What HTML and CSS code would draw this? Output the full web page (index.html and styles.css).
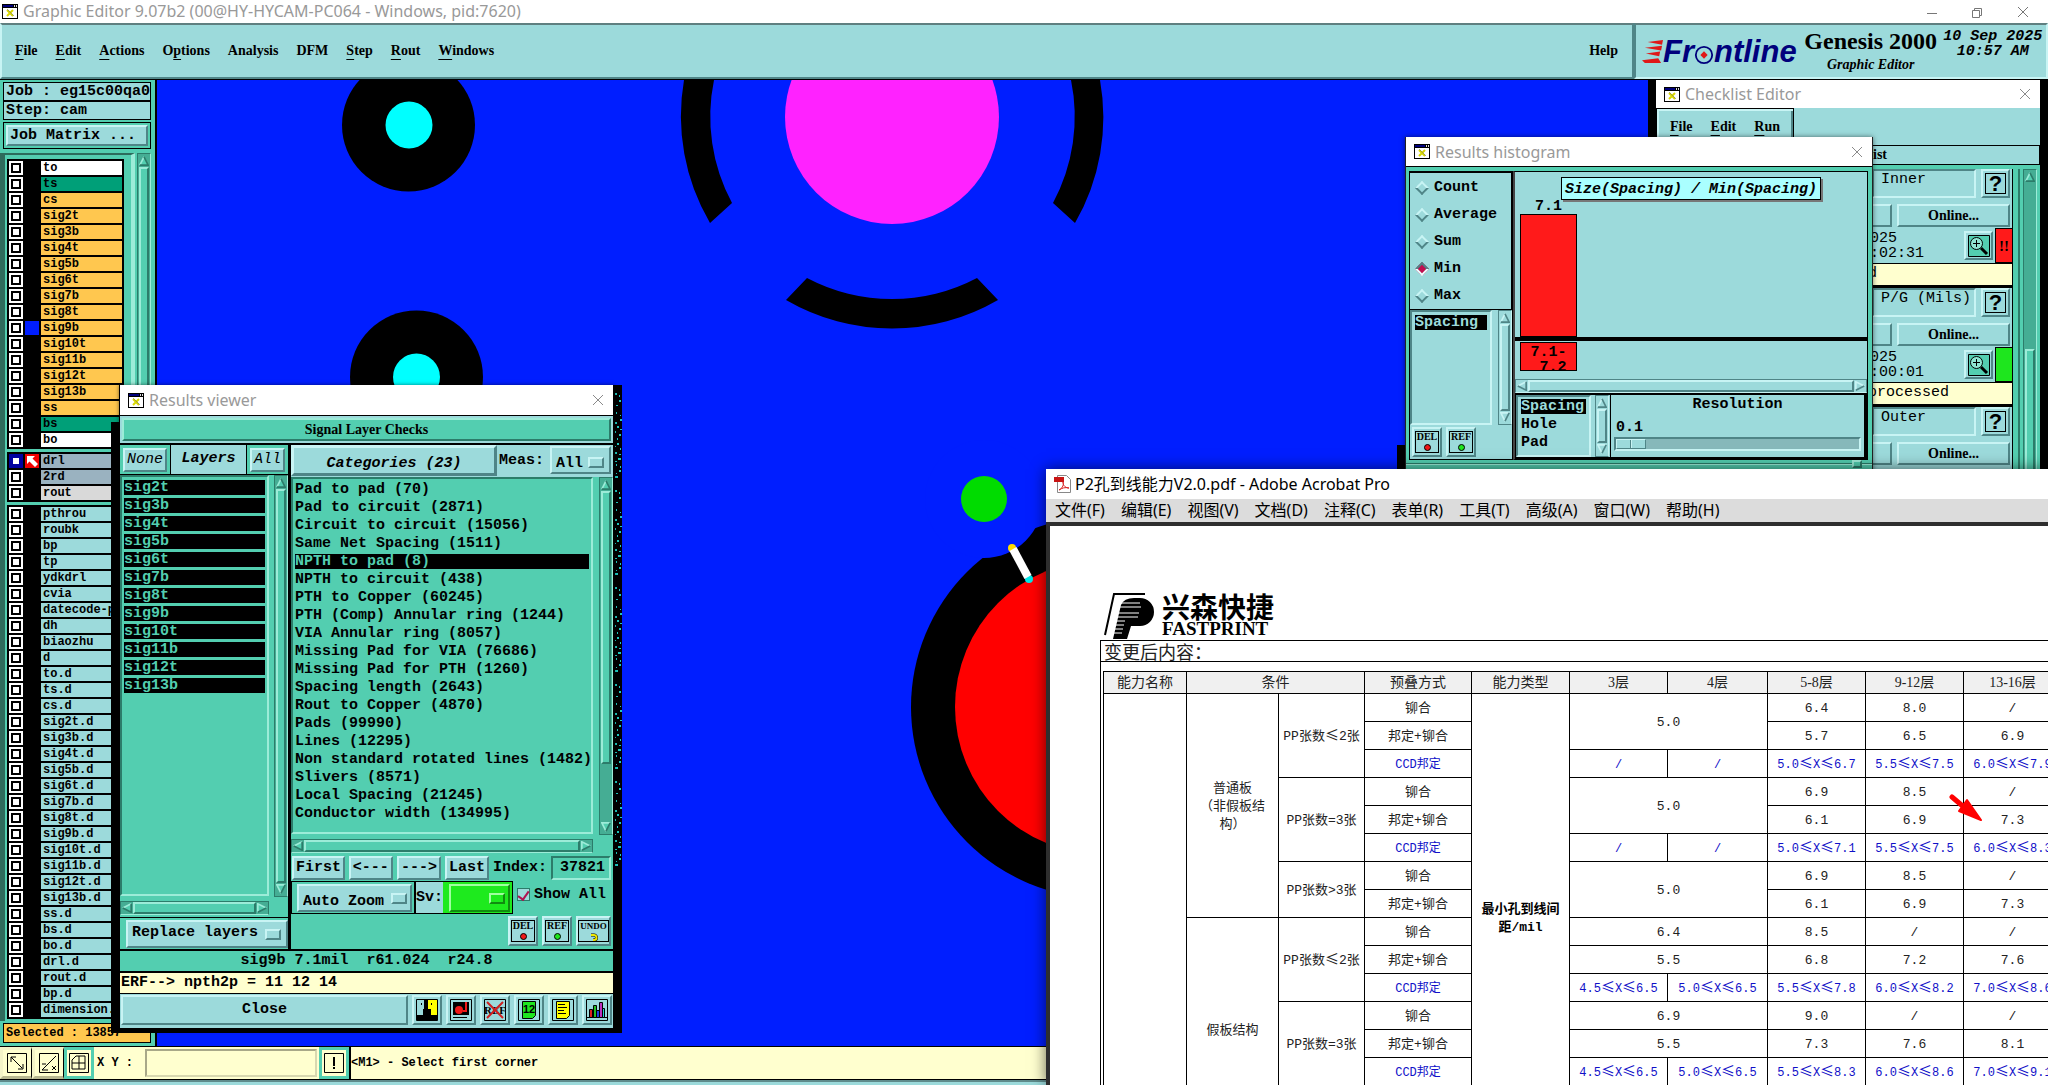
FILE: index.html
```
<!DOCTYPE html>
<html lang="en">
<head>
<meta charset="utf-8">
<title>Graphic Editor</title>
<link rel="stylesheet" href="styles.css">
</head>
<body>
<svg class="defs" aria-hidden="true">
  <symbol id="xwin" viewBox="0 0 16 15"><path fill="#000" d="M0 0h16v15H0z"/><path fill="#fff" d="M1 4h14v10H1z"/><path fill="#00007c" d="M1 1h10v2H1z"/><path fill="#ddd" d="M12 1h1v2h-1zM14 1h1v2h-1z"/><path d="M5 6l6 6M11 6l-6 6" stroke="#d8d800" stroke-width="2"/><path d="M5 5l7 7" stroke="#666" stroke-width=".5"/></symbol>
  <symbol id="close" viewBox="0 0 12 12"><path d="M1 1l10 10M11 1L1 11" stroke="#8a8a8a" fill="none"/></symbol>
  <symbol id="up" viewBox="0 0 12 12"><path d="M1 11L6 1l5 10z" fill="var(--face)"/><path d="M1 11L6 1" stroke="var(--hi)" stroke-width="2"/><path d="M6 1l5 10H1" stroke="var(--lo)" stroke-width="2" fill="none"/></symbol>
  <symbol id="down" viewBox="0 0 12 12"><path d="M1 1l5 10 5-10z" fill="var(--face)"/><path d="M6 11L1 1h10" stroke="var(--hi)" stroke-width="2" fill="none"/><path d="M11 1L6 11" stroke="var(--lo)" stroke-width="2"/></symbol>
  <symbol id="left" viewBox="0 0 12 12"><path d="M11 1L1 6l10 5z" fill="var(--face)"/><path d="M11 1L1 6" stroke="var(--hi)" stroke-width="2"/><path d="M1 6l10 5V1" stroke="var(--lo)" stroke-width="2" fill="none"/></symbol>
  <symbol id="right" viewBox="0 0 12 12"><path d="M1 1l10 5-10 5z" fill="var(--face)"/><path d="M11 6L1 1v10" stroke="var(--hi)" stroke-width="2" fill="none"/><path d="M1 11l10-5" stroke="var(--lo)" stroke-width="2"/></symbol>
  <symbol id="lens" viewBox="0 0 22 22"><path d="M.5.500h21v21h-21z" fill="#53ceb0" stroke="#000"/><circle cx="8.500" cy="8.500" r="6" fill="#8fe6d2" stroke="#000"/><path d="M5 8.500h7M8.500 5v7" stroke="#000"/><path d="M13 13l6 6" stroke="#000" stroke-width="3"/></symbol>
  <symbol id="arc" viewBox="0 0 8 8"><path d="M1 2h3a2 2 0 0 1 0 5H3" fill="none" stroke="#000" stroke-width="3"/><path d="M1 2h3a2 2 0 0 1 0 5H3" fill="none" stroke="#f0e800" stroke-width="2"/></symbol>
</svg>

<div class="app">
  <header class="titlebar main-title">
    <svg class="ico"><use href="#xwin"/></svg><span class="grow">Graphic Editor 9.07b2 (00@HY-HYCAM-PC064 - Windows, pid:7620)</span>
    <svg class="winctl" viewBox="0 0 108 16"><path d="M4 9.500h10M95 3l10 10M105 3L95 13M49.500 6.500h7v7h-7zM51.500 6.500v-2h7v7h-2" fill="none" stroke="#777"/></svg>
  </header>
  <div class="topbar">
    <nav class="menubar">
      <a href="#"><u>F</u>ile</a><a href="#"><u>E</u>dit</a><a href="#"><u>A</u>ctions</a><a href="#">O<u>p</u>tions</a><a href="#">Analysis</a><a href="#">DFM</a><a href="#"><u>S</u>tep</a><a href="#"><u>R</u>out</a><a href="#"><u>W</u>indows</a><a class="help" href="#">Help</a>
    </nav>
    <div class="brand">
      <div class="frontline">
        <svg class="speed" viewBox="0 0 22 26"><path fill="#e01818" d="M6 2l16-2-1 5zM3 8l18-2-1 5zM4 14l15-2-1 5zM0 21l17-2 3 5H3z"/></svg><span>Fr</span><svg class="target" viewBox="0 0 22 22"><circle cx="11" cy="11" r="9" fill="#9cdadb" stroke="#00007c" stroke-width="2"/><path d="M11 7l4 4-4 4-4-4z" fill="#e01818"/></svg><span>ntline</span>
      </div>
      <div class="product"><strong>Genesis 2000</strong><em>Graphic Editor</em></div>
      <div class="clock">10 Sep 2025<br>10:57 AM</div>
    </div>
  </div>

  <div class="work">
    <aside class="side">
      <div class="info">Job : eg15c00qa0</div>
      <div class="info">Step: cam</div>
      <div class="matrix"><button class="raised">Job Matrix ...</button></div>
      <div class="layers">
        <div class="groups">
          <ul class="group">
            <li class="w"><input type="checkbox" id="l1"><i></i><label for="l1">to</label></li>
            <li class="g"><input type="checkbox" id="l2"><i></i><label for="l2">ts</label></li>
            <li class="o"><input type="checkbox" id="l3"><i></i><label for="l3">cs</label></li>
            <li class="o"><input type="checkbox" id="l4"><i></i><label for="l4">sig2t</label></li>
            <li class="o"><input type="checkbox" id="l5"><i></i><label for="l5">sig3b</label></li>
            <li class="o"><input type="checkbox" id="l6"><i></i><label for="l6">sig4t</label></li>
            <li class="o"><input type="checkbox" id="l7"><i></i><label for="l7">sig5b</label></li>
            <li class="o"><input type="checkbox" id="l8"><i></i><label for="l8">sig6t</label></li>
            <li class="o"><input type="checkbox" id="l9"><i></i><label for="l9">sig7b</label></li>
            <li class="o"><input type="checkbox" id="l10"><i></i><label for="l10">sig8t</label></li>
            <li class="o"><input type="checkbox" id="l11"><i class="shown"></i><label for="l11">sig9b</label></li>
            <li class="o"><input type="checkbox" id="l12"><i></i><label for="l12">sig10t</label></li>
            <li class="o"><input type="checkbox" id="l13"><i></i><label for="l13">sig11b</label></li>
            <li class="o"><input type="checkbox" id="l14"><i></i><label for="l14">sig12t</label></li>
            <li class="o"><input type="checkbox" id="l15"><i></i><label for="l15">sig13b</label></li>
            <li class="o"><input type="checkbox" id="l16"><i></i><label for="l16">ss</label></li>
            <li class="g"><input type="checkbox" id="l17"><i></i><label for="l17">bs</label></li>
            <li class="w"><input type="checkbox" id="l18"><i></i><label for="l18">bo</label></li>
          </ul>
          <ul class="group">
            <li class="s"><input type="checkbox" id="l19" checked><i class="active"><svg viewBox="0 0 14 14"><path fill="#fff" d="M2 2h8L7.500 4.500 13 10l-3 3-5.500-5.500L2 10z"/></svg></i><label for="l19">drl</label></li>
            <li class="s"><input type="checkbox" id="l20"><i></i><label for="l20">2rd</label></li>
            <li class="l"><input type="checkbox" id="l21"><i></i><label for="l21">rout</label></li>
          </ul>
          <ul class="group">
            <li><input type="checkbox" id="m1"><i></i><label for="m1">pthrou</label></li>
            <li><input type="checkbox" id="m2"><i></i><label for="m2">roubk</label></li>
            <li><input type="checkbox" id="m3"><i></i><label for="m3">bp</label></li>
            <li><input type="checkbox" id="m4"><i></i><label for="m4">tp</label></li>
            <li><input type="checkbox" id="m5"><i></i><label for="m5">ydkdrl</label></li>
            <li><input type="checkbox" id="m6"><i></i><label for="m6">cvia</label></li>
            <li><input type="checkbox" id="m7"><i></i><label for="m7">datecode-p</label></li>
            <li><input type="checkbox" id="m8"><i></i><label for="m8">dh</label></li>
            <li><input type="checkbox" id="m9"><i></i><label for="m9">biaozhu</label></li>
            <li><input type="checkbox" id="m10"><i></i><label for="m10">d</label></li>
            <li><input type="checkbox" id="m11"><i></i><label for="m11">to.d</label></li>
            <li><input type="checkbox" id="m12"><i></i><label for="m12">ts.d</label></li>
            <li><input type="checkbox" id="m13"><i></i><label for="m13">cs.d</label></li>
            <li><input type="checkbox" id="m14"><i></i><label for="m14">sig2t.d</label></li>
            <li><input type="checkbox" id="m15"><i></i><label for="m15">sig3b.d</label></li>
            <li><input type="checkbox" id="m16"><i></i><label for="m16">sig4t.d</label></li>
            <li><input type="checkbox" id="m17"><i></i><label for="m17">sig5b.d</label></li>
            <li><input type="checkbox" id="m18"><i></i><label for="m18">sig6t.d</label></li>
            <li><input type="checkbox" id="m19"><i></i><label for="m19">sig7b.d</label></li>
            <li><input type="checkbox" id="m20"><i></i><label for="m20">sig8t.d</label></li>
            <li><input type="checkbox" id="m21"><i></i><label for="m21">sig9b.d</label></li>
            <li><input type="checkbox" id="m22"><i></i><label for="m22">sig10t.d</label></li>
            <li><input type="checkbox" id="m23"><i></i><label for="m23">sig11b.d</label></li>
            <li><input type="checkbox" id="m24"><i></i><label for="m24">sig12t.d</label></li>
            <li><input type="checkbox" id="m25"><i></i><label for="m25">sig13b.d</label></li>
            <li><input type="checkbox" id="m26"><i></i><label for="m26">ss.d</label></li>
            <li><input type="checkbox" id="m27"><i></i><label for="m27">bs.d</label></li>
            <li><input type="checkbox" id="m28"><i></i><label for="m28">bo.d</label></li>
            <li><input type="checkbox" id="m29"><i></i><label for="m29">drl.d</label></li>
            <li><input type="checkbox" id="m30"><i></i><label for="m30">rout.d</label></li>
            <li><input type="checkbox" id="m31"><i></i><label for="m31">bp.d</label></li>
            <li><input type="checkbox" id="m32"><i></i><label for="m32">dimension.</label></li>
          </ul>
        </div>
        <div class="vbar green"><svg><use href="#up"/></svg><span class="thumb"></span></div>
      </div>
      <div class="selected">Selected : 13857</div>
    </aside>
    <main class="canvas">
      <svg class="board">
        <g transform="translate(-157 -80)">
          <circle cx="408.500" cy="125" r="66.500"/><circle cx="409" cy="125" r="23.500" fill="#0ff"/>
          <circle cx="416.500" cy="377" r="66.500"/><circle cx="416.500" cy="377" r="23.500" fill="#0ff"/>
          <circle cx="892" cy="117" r="107" fill="#ff22ff"/>
          <path d="M786 300A211 211 0 0 0 998 300L977 278A182 182 0 0 1 807 278z"/>
          <path d="M710 223A211 211 0 0 1 684 80H714A182 182 0 0 0 732 203z"/>
          <path d="M1075 223A211 211 0 0 0 1100 80H1071A182 182 0 0 1 1053 203z"/>
          <circle cx="1102" cy="707" r="191"/><circle cx="984" cy="499" r="59" fill="#001eff"/>
          <circle cx="984" cy="499" r="23" fill="#00dc00"/><circle cx="1102" cy="707" r="147" fill="#f00"/>
          <circle cx="1012" cy="548" r="4" fill="#ffdc00"/><circle cx="1029" cy="579" r="4" fill="#00e8e8"/><path d="M1013 549l15 28" stroke="#fff" stroke-width="8"/>
          <path d="M1648 80h9v60h-9zM1397 445h9v30h-9zM2040 80h8v400h-8z"/>
        </g>
      </svg>
    </main>
  </div>

  <footer class="statusbar">
    <button class="tool" aria-label="Snap"><svg viewBox="0 0 20 20"><path d="M.5.500h19v19H.5zM4 9V4h5M4 4l11 11M11 16h5v-5" fill="none" stroke="#000"/></svg></button>
    <button class="tool" aria-label="Angle"><svg viewBox="0 0 20 20"><path d="M.5.500h19v19H.5zM17 3L3 17h6M3 11h4M13 13l4 4M17 13l-4 4" fill="none" stroke="#000"/></svg></button>
    <button class="tool on" aria-label="Grid"><svg viewBox="0 0 20 20"><path d="M.5.500h19v19H.5zM7 3h9v13H3V7zM10 3v13M3 10h13" fill="none" stroke="#000"/></svg></button>
    <label class="xy" for="xy">X Y :</label><input id="xy" type="text">
    <button class="tool on" aria-label="Alert"><svg viewBox="0 0 20 20"><path d="M.5.500h19v19H.5z" fill="none" stroke="#000"/><path d="M9 4h2v9H9zM9 14h2v2H9z"/></svg></button>
    <output>&lt;M1&gt; - Select first corner</output>
  </footer>
  <div class="edge"></div>
</div>

<section class="win checklist">
  <header class="titlebar"><svg class="ico"><use href="#xwin"/></svg><span class="grow">Checklist Editor</span><svg class="x"><use href="#close"/></svg></header>
  <nav class="cmenu"><a href="#"><u>F</u>ile</a><a href="#"><u>E</u>dit</a><a href="#"><u>R</u>un</a></nav>
  <h2>ist</h2>
  <div class="citems">
    <div class="clist">
      <article>
        <div class="r1"><input type="text" aria-label="Check" value="Inner"><button class="q raised">?</button></div>
        <div class="r2"><button class="raised short" aria-label="Run"></button><button class="raised">Online...</button></div>
        <div class="r3"><time>025<br>:02:31</time><button class="raised lens" aria-label="View"><svg><use href="#lens"/></svg></button><b class="bad">!!</b></div>
        <p>d</p>
      </article>
      <article>
        <div class="r1"><input type="text" aria-label="Check" value="P/G (Mils)"><button class="q raised">?</button></div>
        <div class="r2"><button class="raised short" aria-label="Run"></button><button class="raised">Online...</button></div>
        <div class="r3"><time>025<br>:00:01</time><button class="raised lens" aria-label="View"><svg><use href="#lens"/></svg></button><b class="ok"></b></div>
        <p>processed</p>
      </article>
      <article>
        <div class="r1"><input type="text" aria-label="Check" value="Outer"><button class="q raised">?</button></div>
        <div class="r2"><button class="raised short" aria-label="Run"></button><button class="raised">Online...</button></div>
      </article>
    </div>
    <div class="vbar green"><svg><use href="#up"/></svg><span class="thumb low"></span></div>
  </div>
</section>

<section class="win histogram">
  <header class="titlebar"><svg class="ico"><use href="#xwin"/></svg><span class="grow">Results histogram</span><svg class="x"><use href="#close"/></svg></header>
  <div class="hbody">
    <div class="hleft">
      <fieldset>
        <label><input type="radio" name="agg">Count</label>
        <label><input type="radio" name="agg">Average</label>
        <label><input type="radio" name="agg">Sum</label>
        <label><input type="radio" name="agg" checked>Min</label>
        <label><input type="radio" name="agg">Max</label>
      </fieldset>
      <div class="pick">
        <ul class="sunk"><li class="sel">Spacing</li></ul>
        <div class="vbar"><svg><use href="#up"/></svg><span class="thumb"></span><svg><use href="#down"/></svg></div>
      </div>
      <div class="acts"><button class="raised act"><span>DEL<i class="red"></i></span></button><button class="raised act"><span>REF<i class="grn"></i></span></button></div>
    </div>
    <div class="hright">
      <div class="plot">
        <h3>Size(Spacing) / Min(Spacing)</h3>
        <div class="bars"><span>7.1</span><div class="bar" style="height:123px"></div></div>
      </div>
      <div class="axis"><div>7.1-<br>&nbsp;7.2</div></div>
      <div class="hbar"><svg><use href="#left"/></svg><span class="thumb"></span><svg><use href="#right"/></svg></div>
      <div class="hfoot">
        <ul class="sunk"><li class="sel">Spacing</li><li>Hole</li><li>Pad</li></ul>
        <div class="vbar"><svg><use href="#up"/></svg><span class="thumb"></span><svg><use href="#down"/></svg></div>
        <div class="res"><label for="res">Resolution</label><output>0.1</output><input id="res" type="range" min="0" max="10" value="0"></div>
      </div>
    </div>
  </div>
  <div class="sash"><span></span></div>
</section>

<div class="ghost"><svg><defs><pattern id="noise" width="8" height="97" patternUnits="userSpaceOnUse"><path fill="#20c8c0" d="M1 8h2v2H1zM5 10h1v2H5zM5 15h2v2H5zM2 20h2v1H2zM2 27h1v2H2zM6 30h1v1H6zM6 34h2v2H6zM1 37h2v2H1zM3 41h2v2H3zM6 44h2v1H6zM1 46h1v2H1zM5 49h2v2H5zM3 53h1v2H3zM3 58h2v2H3zM1 61h1v1H1zM6 63h1v2H6zM1 67h2v2H1zM5 69h2v1H5zM4 73h3v2H4zM1 76h2v1H1zM2 79h1v2H2zM6 81h1v2H6zM5 85h2v2H5zM2 88h1v1H2zM1 91h3v2H1z"/></pattern></defs><rect width="8" height="485" fill="url(#noise)"/></svg></div>
<section class="win viewer">
  <header class="titlebar"><svg class="ico"><use href="#xwin"/></svg><span class="grow">Results viewer</span><svg class="x"><use href="#close"/></svg></header>
  <h2><span>Signal Layer Checks</span></h2>
  <div class="vbody">
    <div class="vleft">
      <div class="vhead"><div><button class="raised it">None</button></div><b>Layers</b><div><button class="raised it">All</button></div></div>
      <div class="vlist">
        <div class="col">
          <ul class="sunkg picked"><li>sig2t</li><li>sig3b</li><li>sig4t</li><li>sig5b</li><li>sig6t</li><li>sig7b</li><li>sig8t</li><li>sig9b</li><li>sig10t</li><li>sig11b</li><li>sig12t</li><li>sig13b</li></ul>
          <div class="hbar green"><svg><use href="#left"/></svg><span class="thumb"></span><svg><use href="#right"/></svg></div>
        </div>
        <div class="vbar green"><svg><use href="#up"/></svg><span class="thumb"></span><svg><use href="#down"/></svg></div>
      </div>
      <div class="replace"><span class="opt"><select class="raised" aria-label="Layer mode"><option>Replace layers</option></select></span></div>
    </div>
    <div class="vright">
      <div class="chead"><button class="raised cat">Categories (23)</button><label for="meas">Meas:</label><span class="opt"><select id="meas" class="raised"><option>All</option></select></span></div>
      <div class="vlist">
        <div class="col">
          <ul class="sunkg cats"><li>Pad to pad (70)</li><li>Pad to circuit (2871)</li><li>Circuit to circuit (15056)</li><li>Same Net Spacing (1511)</li><li class="sel">NPTH to pad (8)</li><li>NPTH to circuit (438)</li><li>PTH to Copper (60245)</li><li>PTH (Comp) Annular ring (1244)</li><li>VIA Annular ring (8057)</li><li>Missing Pad for VIA (76686)</li><li>Missing Pad for PTH (1260)</li><li>Spacing length (2643)</li><li>Rout to Copper (4870)</li><li>Pads (99990)</li><li>Lines (12295)</li><li>Non standard rotated lines (1482)</li><li>Slivers (8571)</li><li>Local Spacing (21245)</li><li>Conductor width (134995)</li></ul>
          <div class="hbar green"><svg><use href="#left"/></svg><span class="thumb"></span><svg><use href="#right"/></svg></div>
        </div>
        <div class="vbar green"><svg><use href="#up"/></svg><span class="thumb part"></span><svg><use href="#down"/></svg></div>
      </div>
      <div class="navrow"><button class="raised">First</button><button class="raised">&lt;---</button><button class="raised">---&gt;</button><button class="raised">Last</button><label for="idx">Index:</label><input id="idx" type="text" value="37821"></div>
      <div class="zoomrow">
        <div class="zbox"><span class="opt z"><select class="raised" aria-label="Zoom"><option>Auto Zoom</option></select></span><label for="sv">Sv:</label><span class="opt sv"><select id="sv" class="raised"><option></option></select></span></div>
        <label class="show"><input type="checkbox" checked>Show All</label>
      </div>
      <div class="acts"><button class="raised act"><span>DEL<i class="red"></i></span></button><button class="raised act"><span>REF<i class="grn"></i></span></button><button class="raised act undo"><span>UNDO<svg><use href="#arc"/></svg></span></button></div>
    </div>
  </div>
  <output class="stat">sig9b 7.1mil &nbsp;r61.024 &nbsp;r24.8</output>
  <output class="erf">ERF--&gt; npth2p = 11 12 14</output>
  <div class="foot">
    <button class="raised closebtn">Close</button>
    <button class="raised fi" aria-label="Contrast"><svg viewBox="0 0 22 22"><path fill="#9cdadb" stroke="#000" d="M.5.500h21v21H.5z"/><path fill="#ff0" d="M11 1h10v16H11z"/><path d="M8 1h4v9h3v6h6v5H1v-5h6v-6h1zM5 4h1v2H5zM15 4h1v2h-1z"/></svg></button>
    <button class="raised fi" aria-label="Snapshot"><svg viewBox="0 0 22 22"><path fill="#9cdadb" stroke="#000" d="M.5.500h21v21H.5z"/><path d="M3 3h16v13H3zM3 18h14v1H3z"/><circle cx="9" cy="11" r="4" fill="#f01818"/><path fill="#f01818" d="M15 3h2v10h-2zM13 11h4v2h-4z"/></svg></button>
    <button class="raised fi" aria-label="No reference"><svg viewBox="0 0 22 22"><path fill="none" stroke="#000" d="M.5.500h21v21H.5z"/><text x="0" y="15" font-size="11" font-weight="bold" font-family="Liberation Serif, serif">REF</text><path d="M3 3l16 16M19 3L3 19" stroke="#d02020" stroke-width="2"/></svg></button>
    <button class="raised fi" aria-label="Number page"><svg viewBox="0 0 22 22"><path fill="#9cdadb" stroke="#000" d="M.5.500h21v21H.5z"/><path fill="#1ee61e" stroke="#000" d="M4.500 2.500h13v14l-3 3h-10z"/><text x="5" y="14" font-size="11" font-weight="bold" font-family="Liberation Sans, sans-serif">12</text></svg></button>
    <button class="raised fi" aria-label="Notes"><svg viewBox="0 0 22 22"><path fill="#9cdadb" stroke="#000" d="M.5.500h21v21H.5z"/><path fill="#ff0" stroke="#000" d="M4.500 2.500h13v14l-3 3h-10z"/><path stroke="#000" d="M6 5.500h7M6 8.500h9M6 11.500h6M6 14.500h8"/></svg></button>
    <button class="raised fi" aria-label="Histogram"><svg viewBox="0 0 22 22"><path fill="#9cdadb" stroke="#000" d="M.5.500h21v21H.5z"/><path d="M1 18h20v1H1z"/><path fill="#e02020" stroke="#000" d="M3.500 10.500h3v8h-3z"/><path fill="#20c020" stroke="#000" d="M7.500 6.500h3v12h-3z"/><path fill="#2040e0" stroke="#000" d="M10.500 11.500h3v7h-3z"/><path fill="#c030c0" stroke="#000" d="M13.500 3.500h3v15h-3z"/><path fill="#20d8d8" stroke="#000" d="M16.500 9.500h2v9h-2z"/></svg></button>
  </div>
</section>

<section class="win acrobat">
  <header class="ptitle"><svg viewBox="0 0 18 18"><path fill="#fff" stroke="#888" d="M3.500.500h9l4 4v13h-13z"/><path fill="#c81414" d="M0 2h10v5H0z"/><path d="M5 15c4-2 5-6 4-8 0 4 3 6 6 6-4-1-7 0-10 2z" fill="none" stroke="#d82020"/></svg>P2孔到线能力V2.0.pdf - Adobe Acrobat Pro</header>
  <nav class="pmenu"><a href="#">文件(F)</a><a href="#">编辑(E)</a><a href="#">视图(V)</a><a href="#">文档(D)</a><a href="#">注释(C)</a><a href="#">表单(R)</a><a href="#">工具(T)</a><a href="#">高级(A)</a><a href="#">窗口(W)</a><a href="#">帮助(H)</a></nav>
  <div class="page">
    <div class="flogo">
      <svg viewBox="0 0 52 48"><path d="M1 43L10 2h31" fill="none" stroke="#000" stroke-width="2"/><path d="M9 47L17 13Q20 6 30 6h6a14 14 0 0 1 0 28h-9l-4 13z"/><path d="M17 11h19M15 15h22M15 21h20M14 25h20M13 29h8M12 33h8M11 37h8M10 41h8" stroke="#fff" fill="none"/></svg>
      <div><b>兴森快捷</b><strong>FASTPRINT</strong></div>
    </div>
    <div class="sheet">
      <h4>变更后内容：</h4>
      <table>
        <colgroup><col class="c83"><col class="c92"><col class="c86"><col class="c107"><col class="c98"><col class="c98"><col class="c100"><col class="c98"><col class="c98"><col class="c98"></colgroup>
        <thead><tr><th>能力名称</th><th colspan="2">条件</th><th>预叠方式</th><th>能力类型</th><th>3层</th><th>4层</th><th>5-8层</th><th>9-12层</th><th>13-16层</th></tr></thead>
        <tbody>
          <tr><td rowspan="16"></td><td rowspan="8">普通板<br>（非假板结<br>构）</td><td rowspan="3">PP张数<s>≤</s>2张</td><td>铆合</td><td rowspan="16" class="bold">最小孔到线间<br>距/mil</td><td rowspan="2" colspan="2">5.0</td><td>6.4</td><td>8.0</td><td>/</td></tr>
          <tr><td>邦定+铆合</td><td>5.7</td><td>6.5</td><td>6.9</td></tr>
          <tr class="ccd"><td>CCD邦定</td><td>/</td><td>/</td><td>5.0<s>≤</s>X<s>≤</s>6.7</td><td>5.5<s>≤</s>X<s>≤</s>7.5</td><td>6.0<s>≤</s>X<s>≤</s>7.9</td></tr>
          <tr><td rowspan="3">PP张数=3张</td><td>铆合</td><td rowspan="2" colspan="2">5.0</td><td>6.9</td><td>8.5</td><td>/</td></tr>
          <tr><td>邦定+铆合</td><td>6.1</td><td>6.9</td><td>7.3</td></tr>
          <tr class="ccd"><td>CCD邦定</td><td>/</td><td>/</td><td>5.0<s>≤</s>X<s>≤</s>7.1</td><td>5.5<s>≤</s>X<s>≤</s>7.5</td><td>6.0<s>≤</s>X<s>≤</s>8.3</td></tr>
          <tr><td rowspan="2">PP张数&gt;3张</td><td>铆合</td><td rowspan="2" colspan="2">5.0</td><td>6.9</td><td>8.5</td><td>/</td></tr>
          <tr><td>邦定+铆合</td><td>6.1</td><td>6.9</td><td>7.3</td></tr>
          <tr><td rowspan="8">假板结构</td><td rowspan="3">PP张数<s>≤</s>2张</td><td>铆合</td><td colspan="2">6.4</td><td>8.5</td><td>/</td><td>/</td></tr>
          <tr><td>邦定+铆合</td><td colspan="2">5.5</td><td>6.8</td><td>7.2</td><td>7.6</td></tr>
          <tr class="ccd"><td>CCD邦定</td><td>4.5<s>≤</s>X<s>≤</s>6.5</td><td>5.0<s>≤</s>X<s>≤</s>6.5</td><td>5.5<s>≤</s>X<s>≤</s>7.8</td><td>6.0<s>≤</s>X<s>≤</s>8.2</td><td>7.0<s>≤</s>X<s>≤</s>8.6</td></tr>
          <tr><td rowspan="3">PP张数=3张</td><td>铆合</td><td colspan="2">6.9</td><td>9.0</td><td>/</td><td>/</td></tr>
          <tr><td>邦定+铆合</td><td colspan="2">5.5</td><td>7.3</td><td>7.6</td><td>8.1</td></tr>
          <tr class="ccd"><td>CCD邦定</td><td>4.5<s>≤</s>X<s>≤</s>6.5</td><td>5.0<s>≤</s>X<s>≤</s>6.5</td><td>5.5<s>≤</s>X<s>≤</s>8.3</td><td>6.0<s>≤</s>X<s>≤</s>8.6</td><td>7.0<s>≤</s>X<s>≤</s>9.1</td></tr>
          <tr><td rowspan="2"></td><td></td><td colspan="2"></td><td></td><td></td><td></td></tr>
          <tr><td></td><td colspan="2"></td><td></td><td></td><td></td></tr>
        </tbody>
      </table>
    </div>
    <svg class="mark" viewBox="0 0 36 32"><path d="M3 5l13 11" stroke="#f00" stroke-width="5" stroke-linecap="round"/><path d="M18 8L10 19l22 9z" fill="#f00" stroke="#f00" stroke-width="2" stroke-linejoin="round"/></svg>
  </div>
</section>
</body>
</html>
```
FILE: styles.css
```
:root {
  --teal: #9cdadb;
  --green: #53ceb0;
  --cream: #ffffcf;
  --mono: "Liberation Mono", monospace;
  --serif: "Liberation Serif", serif;
  --ui: "Noto Sans", "Noto Sans CJK SC", sans-serif;
  --face: var(--teal);
  --hi: #c8f4f4;
  --lo: #4f8587;
}
* { box-sizing: border-box; }
body { margin: 0; height: 100vh; overflow: hidden; position: relative; font: bold 15px/18px var(--mono); color: #000; background: #000; }
ul, h2, h3, h4, p { margin: 0; padding: 0; list-style: none; font: inherit; }
button, input, select { font: inherit; color: inherit; margin: 0; padding: 0; border-radius: 0; white-space: nowrap; }
button, select { background: var(--teal); }
svg { display: block; flex: none; }
a { color: inherit; text-decoration: none; }
s { text-decoration: none; font: 14px/14px "Noto Sans CJK SC", sans-serif; }
.defs { position: absolute; width: 0; height: 0; }
.grow { flex: 1; }
.raised { border: 2px solid; border-color: var(--hi) var(--lo) var(--lo) var(--hi); }
.green, .sunkg { --face: var(--green); --hi: #9cecd8; --lo: #2c7c6a; }
.sunk, .sunkg { border: 2px solid; border-color: var(--lo) var(--hi) var(--hi) var(--lo); }

.app { height: 100%; display: flex; flex-direction: column; }
.titlebar { display: flex; align-items: center; gap: 5px; height: 30px; padding: 0 9px 0 8px; background: #fff; color: #999; font: 16px/28px var(--ui); white-space: nowrap; }
.main-title { height: 23px; padding: 0 17px 0 2px; flex: none; line-height: 23px; }
.ico { width: 16px; height: 15px; }
.x { width: 12px; height: 12px; }
.winctl { width: 108px; height: 16px; }

.topbar { display: flex; height: 57px; flex: none; background: var(--teal); border-bottom: 1px solid #000; }
.menubar { flex: 1; display: flex; align-items: center; gap: 18px; padding: 0 14px 0 13px; border: 2px solid; border-color: #5f7f80 var(--lo) var(--lo) var(--hi); font: bold 14px/20px var(--serif); }
.menubar u, .cmenu u { text-underline-offset: 4px; }
.help { margin-left: auto; }
.brand { display: flex; width: 414px; padding: 4px 0 0 6px; border: 2px solid; border-color: #5f7f80 var(--hi) var(--hi) var(--lo); }
.frontline { display: flex; align-items: center; height: 46px; color: #00007c; font: italic bold 31px/46px "Liberation Sans", sans-serif; }
.speed { width: 21px; height: 25px; }
.target { width: 20px; height: 20px; margin-top: 5px; }
.product { display: flex; flex-direction: column; align-items: center; margin-left: 5px; width: 138px; font-family: var(--serif); }
.product strong { font-size: 24px; line-height: 24px; }
.product em { font-size: 14px; line-height: 24px; }
.clock { flex: 1; text-align: center; font-style: italic; line-height: 15px; white-space: nowrap; }

.work { flex: 1; display: flex; min-height: 0; }
.side { width: 157px; flex: none; padding: 2px 4px 0 0; display: flex; flex-direction: column; background: var(--green); border-right: 2px solid #000; overflow: hidden; }
.info, .matrix, .selected { margin-left: 3px; border: 1px solid #000; background: var(--teal); flex: none; white-space: nowrap; }
.info { height: 19px; line-height: 17px; padding-left: 2px; }
.matrix { height: 27px; margin-top: 2px; padding: 2px; background: var(--green); }
.matrix button { width: 100%; height: 21px; line-height: 16px; text-align: left; padding-left: 2px; }
.layers { display: flex; justify-content: space-between; margin-top: 4px; flex: none; height: 868px; }
.groups { width: 135px; padding: 4px 3px 0 2px; border: solid; border-width: 2px 4px 0 5px; border-color: #2c6c5c #9cecd8 #2c6c5c #2f6b5c; display: flex; flex-direction: column; gap: 3px; }
.group { background: #000; padding: 2px; display: flex; flex-direction: column; gap: 2px; width: 117px; font-size: 12px; }
.group li { display: flex; height: 14px; }
.group input { appearance: none; width: 14px; height: 14px; border: 2px solid #fff; background: #fff; outline: 2px solid #000; outline-offset: -4px; }
.group input:checked { border-color: #0000a0; outline-color: #0000a0; }
.group i { width: 14px; height: 14px; margin: 0 2px; }
.group i.shown { background: #001eff; }
.group i.active { background: #f00000; }
.group label { flex: 1; padding-left: 2px; line-height: 14px; background: var(--teal); overflow: hidden; white-space: nowrap; }
.group .w label { background: #fff; }
.group .g label { background: #009f78; }
.group .o label { background: #ffc74f; }
.group .s label { background: #9ab2c0; }
.group .l label { background: #d9d9d9; }
.selected { height: 20px; margin-top: 2px; background: #ffc74f; font-size: 12px; line-height: 18px; padding-left: 2px; }
.canvas { flex: 1; background: #001eff; min-width: 0; }
.board { width: 100%; height: 100%; }

.vbar { width: 14px; flex: none; display: flex; flex-direction: column; padding: 1px; border: 1px solid var(--lo); border-right-color: var(--hi); }
.vbar svg, .hbar svg { width: 10px; height: 12px; }
.hbar { height: 14px; flex: none; display: flex; align-items: center; border: 1px solid var(--lo); border-bottom-color: var(--hi); }
.hbar svg { width: 12px; height: 10px; }
.thumb { flex: 1; align-self: stretch; background: var(--face); border: 2px solid; border-color: var(--hi) var(--lo) var(--lo) var(--hi); }
.green.vbar, .green.hbar { background: #45ad94; }
.thumb.part { margin-bottom: 57px; }
.thumb.low { margin-top: 166px; }

.statusbar { display: flex; height: 34px; flex: none; border: solid #000; border-width: 1px 0; background: var(--cream); font-size: 12px; line-height: 32px; }
.tool { width: 32px; padding: 0; display: grid; place-items: center; background: var(--cream); border: 3px solid; border-color: #f4f4c8 #b8b890 #b8b890 #f4f4c8; border-right: 1px solid #000; }
.tool svg { width: 20px; height: 20px; }
.tool.on { width: 30px; border: 3px solid var(--green); }
.xy { width: 49px; padding-left: 3px; }
.statusbar input { width: 172px; height: 28px; margin: 2px; background: var(--cream); border: 2px solid; border-color: #a8a888 #d8d8b0 #d8d8b0 #a8a888; }
.statusbar output { flex: 1; border-left: 2px solid #000; }
.edge { height: 5px; flex: none; background: var(--teal); border-top: 2px solid #5f8b8b; }

.win { position: absolute; display: flex; flex-direction: column; }

.viewer { left: 119px; top: 385px; width: 495px; background: var(--green); border: 1px solid #000; border-top: 0; box-shadow: 0 0 4px #0008; }
.ghost { position: absolute; left: 111px; top: 422px; width: 511px; height: 611px; background: #000; }
.ghost svg { position: absolute; right: 0; top: -37px; width: 8px; height: 648px; background: #000; }
.viewer h2 { height: 30px; padding: 2px; border: solid #000; border-width: 1px 0 2px; background: var(--teal); text-align: center; font: bold 14px/18px var(--serif); }
.viewer h2 span { display: block; height: 23px; line-height: 19px; background: var(--green); border: 2px solid; border-color: #9cecd8 #2c7c6a #2c7c6a #9cecd8; }
.vbody { display: flex; border-bottom: 2px solid #000; }
.vleft { width: 171px; display: flex; flex-direction: column; border-right: 3px solid #000; }
.vright { flex: 1; display: flex; flex-direction: column; min-width: 0; }
.vhead { display: flex; height: 30px; border-bottom: 1px solid #000; text-align: center; line-height: 26px; }
.vhead div { padding: 2px 3px; }
.vhead button { height: 24px; padding: 0 2px; }
.vhead b { flex: 1; background: var(--teal); border: solid #000; border-width: 0 1px; font-style: italic; line-height: 28px; }
.it { font-weight: normal; font-style: italic; line-height: 20px; }
.vlist { display: flex; justify-content: space-between; flex: 1; }
.vlist > .vbar { margin-bottom: 20px; }
.col { display: flex; flex-direction: column; gap: 5px; width: 302px; padding-bottom: 2px; }
.vleft .col { width: 149px; }
.col ul { flex: 1; padding: 3px 2px 8px 2px; overflow: hidden; }
.col li { height: 15px; line-height: 15px; margin-bottom: 3px; white-space: pre; }
.picked li, .cats .sel { background: #000; color: var(--green); }
.replace { height: 32px; border-top: 1px solid #000; padding: 2px 0 1px 6px; }
.opt { position: relative; display: block; }
.opt::after { content: ""; position: absolute; right: 7px; top: 50%; margin-top: -5px; width: 12px; height: 7px; background: var(--teal); border: 2px solid; border-color: var(--hi) var(--lo) var(--lo) var(--hi); }
.opt select { appearance: none; display: block; width: 100%; height: 28px; padding: 0 0 2px 4px; }
.chead { display: flex; height: 32px; line-height: 32px; background: var(--teal); }
.cat { width: 206px; height: 31px; font-style: italic; border-width: 3px; padding-bottom: 2px; }
.chead label { padding-left: 2px; }
.chead .opt { flex: 1; margin: 1px 2px 0 6px; }
.navrow { display: flex; gap: 4px; height: 26px; padding: 1px 2px 1px 1px; line-height: 24px; }
.navrow button { padding: 0; width: 45px; line-height: 18px; }
.navrow button:first-child { width: 54px; }
.navrow input { width: 60px; margin-left: auto; background: var(--green); border: 2px solid; border-color: #2c7c6a #9cecd8 #9cecd8 #2c7c6a; padding-left: 7px; }
.zoomrow { display: flex; align-items: flex-start; height: 35px; }
.zbox { display: flex; height: 33px; border: 1px solid #000; line-height: 32px; background: var(--teal); }
.zbox .opt { padding: 2px 2px 1px; }
.z { width: 124px; border-right: 2px solid #000; background: var(--green); }
.zbox .z { padding-left: 5px; }
.sv { width: 69px; background: #1eea1e; }
.zbox .sv { padding-left: 6px; }
.sv select, .sv::after { background: #1eea1e; --hi: #a0ffa0; --lo: #108c10; }
.show { display: flex; gap: 4px; padding: 5px 0 0 4px; }
.show input { appearance: none; width: 13px; height: 13px; margin-top: 2px; background: var(--teal); border: 1px solid #2c7c6a; display: grid; place-items: center; }
.show input:checked::before { content: ""; width: 5px; height: 9px; border: solid #b01050; border-width: 0 2px 2px 0; transform: rotate(35deg); }
.acts { display: flex; gap: 4px; justify-content: flex-end; padding: 0 2px 3px 0; }
.act { width: 30px; height: 30px; padding: 1px; font: bold 10px/10px var(--serif); }
.act span { display: flex; flex-direction: column; align-items: center; width: 100%; height: 22px; gap: 2px; border: 1px solid #000; overflow: hidden; }
.act i { width: 7px; height: 7px; border: 1px solid #000; border-radius: 50%; }
.act svg { width: 8px; height: 8px; }
.act.undo { width: 35px; padding: 1px 0; font-size: 9px; }
.red { background: #f01818; }
.grn { background: #1ee61e; }
.stat { height: 22px; line-height: 20px; text-align: center; border-bottom: 2px solid #000; white-space: nowrap; }
.erf { height: 21px; line-height: 19px; padding-left: 1px; background: var(--cream); border-bottom: 1px solid #000; }
.foot { display: flex; gap: 4px; padding: 1px 1px 3px; background: var(--teal); }
.closebtn { flex: 1; }
.fi { width: 30px; height: 30px; display: grid; place-items: center; }
.fi svg { width: 22px; height: 22px; overflow: hidden; }

.checklist { left: 1656px; top: 80px; width: 384px; height: 400px; background: var(--teal); overflow: hidden; }
.cmenu { width: 138px; height: 37px; flex: none; display: flex; align-items: center; gap: 18px; padding: 0 0 1px 13px; border: 1px solid #000; border-bottom: 0; box-shadow: inset 2px 2px var(--hi), inset -2px 0 var(--lo); font: bold 14px/20px var(--serif); }
.checklist h2 { height: 20px; flex: none; padding-left: 216px; border: 1px solid #000; font: bold 14px/18px var(--serif); }
.citems { display: flex; justify-content: flex-end; gap: 3px; padding: 4px 3px 0 0; background: var(--green); }
.clist { width: 162px; padding-right: 7px; box-shadow: inset -2px 0 #2c7c6a; }
.clist article { height: 119px; background: var(--teal); border: solid #000; border-width: 0 1px 3px 0; font-weight: normal; }
.r1 { display: flex; gap: 5px; height: 35px; padding: 0 2px 5px 14px; }
.r1 input { flex: 1; min-width: 0; height: 29px; background: var(--teal); border: 2px solid; border-color: var(--lo) var(--hi) var(--hi) var(--lo); padding: 0 0 8px 7px; }
.q { width: 29px; height: 29px; font: bold 22px/20px "Liberation Sans", sans-serif; outline: 1px solid #000; outline-offset: -5px; }
.r2 { display: flex; gap: 5px; height: 24px; padding: 0 2px 1px 0; }
.r2 button { flex: 1; font: bold 14px/18px var(--serif); }
.r2 .short { flex: none; width: 34px; }
.r3 { display: flex; justify-content: flex-end; height: 35px; gap: 2px; }
.r3 time { flex: 1; padding: 3px 0 0 12px; line-height: 15px; }
.lens { width: 29px; height: 29px; margin-top: 3px; display: grid; place-items: center; }
.lens svg { width: 22px; height: 22px; }
.r3 b { width: 17px; border: 1px solid #000; border-right: 0; text-align: center; line-height: 34px; font-family: var(--serif); }
.r3 .bad { background: #ff1a1a; }
.r3 .ok { background: #1ee61e; }
.clist p { height: 22px; line-height: 20px; padding-left: 10px; background: var(--cream); border-top: 1px solid #000; }

.histogram { left: 1405px; top: 137px; width: 468px; height: 343px; background: var(--green); border: solid #222; border-width: 0 1px; box-shadow: 0 0 5px #0008; }
.histogram .titlebar { height: 29px; }
.hbody { display: flex; padding: 4px 4px 0 3px; height: 294px; border-top: 1px solid #000; }
.hleft { width: 104px; background: var(--teal); border: 1px solid #000; display: flex; flex-direction: column; }
.histogram fieldset { margin: 0; padding: 1px 0 0 5px; border: solid #000; border-width: 1px 1px 1px 0; height: 138px; display: flex; flex-direction: column; }
.histogram fieldset label { display: flex; align-items: center; gap: 7px; height: 27px; }
.histogram fieldset input { appearance: none; width: 10px; height: 10px; margin-left: 2px; transform: rotate(45deg); border: 2px solid; border-color: var(--hi) var(--lo) var(--lo) var(--hi); }
.histogram fieldset input:checked { background: #c01050; border-color: var(--lo) #e8ffff #e8ffff var(--lo); }
.pick { display: flex; justify-content: space-between; height: 115px; }
.pick ul { width: 82px; padding: 3px; }
.histogram .sel { background: #000; color: var(--teal); }
.pick li { line-height: 15px; }
.hleft .acts { justify-content: flex-start; padding: 2px; }
.hright { flex: 1; display: flex; flex-direction: column; background: var(--teal); border: 1px solid #000; border-left: 2px solid #444; min-width: 0; }
.plot { position: relative; height: 169px; border-bottom: 4px solid #000; display: flex; align-items: flex-end; padding-left: 5px; }
.plot h3 { position: absolute; left: 46px; top: 5px; width: 260px; height: 23px; line-height: 24px; text-align: center; font-style: italic; background: #aff; border: 1px solid #000; box-shadow: 2px 2px #777; white-space: nowrap; }
.bars { width: 57px; text-align: center; }
.bars span { display: block; height: 15px; line-height: 16px; }
.bar { background: #ff1a1a; border: 1px solid #000; }
.axis { height: 38px; padding: 1px 5px; line-height: 15px; }
.axis div { width: 57px; height: 29px; text-align: center; background: #ff1a1a; border: 1px solid #000; padding-top: 2px; }
.hfoot { display: flex; flex: 1; border: 2px solid #000; border-width: 2px 3px 2px 1px; min-height: 0; }
.hfoot ul { width: 75px; padding: 2px 3px; }
.hfoot li { line-height: 15px; height: 15px; margin-bottom: 3px; }
.hfoot .vbar { margin: 0 1px 0 4px; }
.res { flex: 1; display: flex; flex-direction: column; padding: 0 3px 3px; border-left: 1px solid #000; }
.res label { text-align: center; height: 22px; line-height: 20px; }
.res output { height: 20px; line-height: 22px; padding-left: 2px; }
.res input { appearance: none; height: 14px; width: 100%; background: #86b8ba; border: 2px solid; border-color: var(--lo) var(--hi) var(--hi) var(--lo); }
.res input::-webkit-slider-thumb { appearance: none; width: 30px; height: 10px; background: linear-gradient(90deg, #0000 13px, #4f8587 13px 14px, #c8f4f4 14px 15px, #0000 15px) var(--teal); border: 1px solid; border-color: #c8f4f4 #4f8587 #4f8587 #c8f4f4; }
.sash { height: 8px; display: flex; justify-content: flex-end; padding-right: 10px; background: linear-gradient(#0000 3px, #2c7c6a 3px 4px, #9cecd8 4px 5px, #0000 5px); }
.sash span { width: 10px; height: 8px; background: var(--green); border: 2px solid; border-color: #9cecd8 #2c7c6a #2c7c6a #9cecd8; }

.acrobat { left: 1046px; right: 0; top: 469px; bottom: 0; background: #fff; overflow: hidden; font-weight: normal; box-shadow: 0 0 14px #0009; }
.ptitle { display: flex; align-items: center; gap: 3px; height: 30px; flex: none; padding-left: 8px; font: 16px/28px var(--ui); white-space: nowrap; }
.ptitle svg { width: 18px; height: 18px; }
.pmenu { display: flex; gap: 16px; height: 23px; flex: none; padding-left: 9px; background: #dcdcdc; font: 16px/22px var(--ui); white-space: nowrap; }
.page { position: relative; flex: 1; border: solid #2e2e2e; border-width: 4px 0 0 4px; padding: 66px 0 0 50px; min-height: 0; }
.flogo { display: flex; gap: 6px; height: 48px; padding-left: 4px; }
.flogo svg { width: 52px; height: 48px; }
.flogo div { display: flex; flex-direction: column; }
.flogo b { font: bold 28px/28px "Noto Sans CJK SC", sans-serif; }
.flogo strong { font: bold 19px/18px var(--serif); }
.sheet { border: solid #000; border-width: 1px 0 0 1px; padding-left: 2px; }
.sheet h4 { margin-left: -2px; padding-left: 3px; height: 21px; border-bottom: 1px solid #000; margin-bottom: 9px; font: 18px/20px "Noto Sans CJK SC", sans-serif; color: #222; }
table { border-collapse: collapse; table-layout: fixed; width: 958px; }
.c83 { width: 83px; }
.c92 { width: 92px; }
.c86 { width: 86px; }
.c107 { width: 107px; }
.c98 { width: 98px; }
.c100 { width: 100px; }
th, td { border: 1px solid #000; padding: 2px 0 0; text-align: center; white-space: nowrap; }
th { height: 22px; padding: 0; background: #f0f0f0; font: 14px/18px "Liberation Serif", "Noto Sans CJK SC", serif; color: #222; }
td { height: 28px; font: 13px/18px "Liberation Mono", "Noto Sans CJK SC", monospace; color: #222; }
.bold { font-weight: bold; color: #000; }
.ccd td { color: #1010c8; font-size: 12px; }
.mark { position: absolute; left: 899px; top: 266px; width: 36px; height: 32px; }
```
